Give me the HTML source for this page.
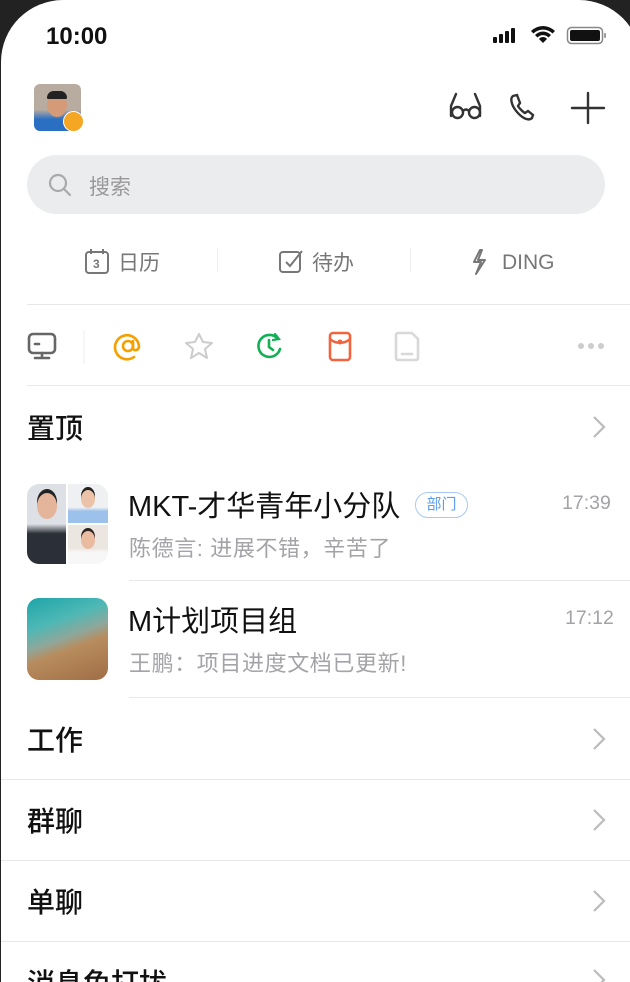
<!DOCTYPE html>
<html><head><meta charset="utf-8"><style>
*{margin:0;padding:0;box-sizing:border-box}
html,body{width:630px;height:982px;overflow:hidden}
body{background:#222;font-family:"Liberation Sans","Noto Sans CJK SC",sans-serif;position:relative}
#s{position:absolute;left:1px;top:0;width:640px;height:982px;background:#fff;border-radius:62px 62px 0 0}
.a{position:absolute}
.t{position:absolute;white-space:nowrap;line-height:1}
.ln{position:absolute;height:1px;background:#e8e8ea}
.h{font-size:28px;color:#111;font-weight:500}
.chev{position:absolute;left:592px;width:14px;height:24px}
.g{font-size:22px;color:#a3a3a8;letter-spacing:0.6px}
</style></head><body>
<div id="s"></div>
<div class="t" style="left:46px;top:25px;font-size:24px;font-weight:bold;color:#111">10:00</div>
<svg class="a" style="left:493px;top:26px" width="118" height="20">
<rect x="0" y="11" width="4" height="6" rx="1" fill="#111"/><rect x="6" y="8" width="4" height="9" rx="1" fill="#111"/><rect x="12" y="5" width="4" height="12" rx="1" fill="#111"/><rect x="18" y="2" width="4" height="15" rx="1" fill="#111"/>
<path d="M38 5a17 17 0 0 1 24 0l-2.5 2.5a13.5 13.5 0 0 0-19 0z M42 9a11 11 0 0 1 16 0l-2.5 2.5a7.5 7.5 0 0 0-11 0z M46 13a5 5 0 0 1 8 0l-4 4z" fill="#111"/>
<rect x="74.5" y="1.5" width="35" height="16" rx="4" fill="none" stroke="#888" stroke-width="1.5"/><rect x="77" y="4" width="30" height="11" rx="2" fill="#111"/><rect x="111" y="7" width="2" height="5" rx="1" fill="#999"/>
</svg>
<div class="a" style="left:34px;top:84px;width:47px;height:47px;border-radius:6px;background:linear-gradient(#b8aba0 0 55%,#2a6fc2 75%)"></div>
<div class="a" style="left:47px;top:93px;width:20px;height:24px;border-radius:50%;background:#d59a78"></div>
<div class="a" style="left:47px;top:91px;width:20px;height:8px;border-radius:10px 10px 2px 2px;background:#222"></div>
<div class="a" style="left:63px;top:111px;width:21px;height:21px;border-radius:50%;background:#f5a623;border:1.5px solid #fff"></div>
<svg class="a" style="left:448px;top:90px" width="160" height="36" fill="none" stroke="#333" stroke-width="2.4" stroke-linecap="round">
<path d="M8 4 3 16v10M27 4l5 12v10"/><rect x="4" y="17" width="11" height="11" rx="5.5"/><rect x="21" y="17" width="11" height="11" rx="5.5"/><path d="M15 21c2-2 4-2 6 0"/>
<path d="M69 5l-4 1c-3 2-2 9 4 16 6 7 12 9 15 6l1-3-5-4-3 2c-2-1-6-5-7-7l2-3z"/>
<path d="M140 3v30M124 18h32"/>
</svg>
<div class="a" style="left:27px;top:155px;width:578px;height:59px;border-radius:30px;background:#ebecee"></div>
<svg class="a" style="left:48px;top:173px" width="26" height="26" fill="none" stroke="#aaa" stroke-width="2.2"><circle cx="10" cy="10" r="8"/><path d="M16 16l6 6" stroke-linecap="round"/></svg>
<div class="t" style="left:89px;top:177px;font-size:21px;color:#999">搜索</div>
<svg class="a" style="left:84px;top:248px" width="440" height="28" fill="none" stroke="#777" stroke-width="2">
<rect x="2" y="4" width="22" height="21" rx="3"/><path d="M7 1v5M19 1v5"/><text x="9" y="20" font-size="12" fill="#777" stroke="none" font-family="Liberation Sans" font-weight="bold">3</text>
<rect x="196" y="4" width="20" height="20" rx="3"/><path d="M202 14l4 4 12-15"/>
<path d="M396 2l-6 12h7l-5 12 9-14h-7l4-10z" stroke-linejoin="round"/>
</svg>
<div class="t" style="left:118px;top:253px;font-size:21px;color:#777">日历</div>
<div class="a" style="left:217px;top:248px;width:1px;height:24px;background:#eee"></div>
<div class="t" style="left:312px;top:253px;font-size:21px;color:#777">待办</div>
<div class="a" style="left:410px;top:248px;width:1px;height:24px;background:#eee"></div>
<div class="t" style="left:502px;top:252px;font-size:21px;color:#777">DING</div>
<div class="ln" style="left:27px;top:304px;width:603px"></div>
<svg class="a" style="left:26px;top:330px" width="590" height="34" fill="none" stroke-width="2.6" stroke-linecap="round">
<g stroke="#666"><rect x="3" y="4" width="26" height="19" rx="4"/><path d="M9 28h14M16 23v5M9 14h4"/></g>
<path d="M58 -2v36" stroke="#eee" stroke-width="1"/>
<g stroke="#f5a000"><circle cx="102" cy="16" r="5"/><path d="M107 11v7c0 3 5 3 6-1a12 12 0 1 0-5 10"/></g>
<path d="M173 4l4 8 9 1-7 6 2 9-8-5-8 5 2-9-7-6 9-1z" stroke="#ccc" stroke-width="2" stroke-linejoin="round"/>
<g stroke="#11b055"><path d="M252 9a11 11 0 1 0 2 10"/><path d="M243 10v7l4 3"/><path d="M249 4l4 5-6 1" stroke-width="2.2"/></g>
<g stroke="#f2643c"><rect x="304" y="3" width="20" height="27" rx="3"/><path d="M304 9c5 5 15 5 20 0"/></g><circle cx="314" cy="12" r="2.5" fill="#f2643c"/>
<g stroke="#d8d8d8"><path d="M372 3h14l6 6v19a2 2 0 0 1-2 2h-18a2 2 0 0 1-2-2V5a2 2 0 0 1 2-2zM376 24h10"/></g>
<g fill="#ccc" stroke="none"><circle cx="555" cy="16" r="3"/><circle cx="565" cy="16" r="3"/><circle cx="575" cy="16" r="3"/></g>
</svg>
<div class="ln" style="left:27px;top:385px;width:603px"></div>
<div class="t h" style="left:27px;top:415px">置顶</div>
<svg class="chev" style="top:415px" viewBox="0 0 14 24"><path d="M2 2l10 10-10 10" fill="none" stroke="#bbb" stroke-width="2.2"/></svg>
<div class="a" style="left:27px;top:484px;width:81px;height:80px;border-radius:12px;overflow:hidden;background:#fff">
<div class="a" style="left:0;top:0;width:39px;height:80px;background:linear-gradient(#dde0e4 0 50%,#2b2f38 62%)"></div>
<div class="a" style="left:10px;top:9px;width:20px;height:26px;border-radius:50%;background:#e4b59a;box-shadow:0 -4px 0 #222"></div>
<div class="a" style="left:41px;top:0;width:40px;height:39px;background:linear-gradient(#eef0f2 0 60%,#9cc2ec 70%)"></div>
<div class="a" style="left:54px;top:6px;width:14px;height:18px;border-radius:50%;background:#ecc3a8;box-shadow:0 -3px 0 #222"></div>
<div class="a" style="left:41px;top:41px;width:40px;height:39px;background:linear-gradient(#ece6e0 0 60%,#f7f7f7 70%)"></div>
<div class="a" style="left:54px;top:47px;width:14px;height:18px;border-radius:50%;background:#e9bca2;box-shadow:0 -3px 0 #2a2222"></div>
</div>
<div class="t" style="left:128px;top:493px;font-size:29px;color:#111">MKT-才华青年小分队</div>
<div class="t" style="left:415px;top:492px;width:53px;height:26px;border:1px solid #a9c9f5;border-radius:13px;color:#5c9df0;font-size:15px;text-align:center;line-height:24px">部门</div>
<div class="t" style="left:562px;top:494px;font-size:19.5px;color:#a3a3a8">17:39</div>
<div class="t g" style="left:129px;top:538px">陈德言: 进展不错，辛苦了</div>
<div class="ln" style="left:129px;top:580px;width:501px"></div>
<div class="a" style="left:27px;top:598px;width:81px;height:82px;border-radius:12px;background:linear-gradient(160deg,#1ea5a9 0%,#4eb8b5 30%,#8fa79a 48%,#b88c5e 60%,#a06d45 100%)"></div>
<div class="t" style="left:128px;top:608px;font-size:29px;color:#111">M计划项目组</div>
<div class="t" style="left:565px;top:609px;font-size:19.5px;color:#a3a3a8">17:12</div>
<div class="t g" style="left:129px;top:653px">王鹏：项目进度文档已更新!</div>
<div class="ln" style="left:129px;top:697px;width:501px"></div>
<div class="t h" style="left:27px;top:727px">工作</div>
<svg class="chev" style="top:727px" viewBox="0 0 14 24"><path d="M2 2l10 10-10 10" fill="none" stroke="#bbb" stroke-width="2.2"/></svg>
<div class="ln" style="left:1px;top:779px;width:629px"></div>
<div class="t h" style="left:27px;top:808px">群聊</div>
<svg class="chev" style="top:808px" viewBox="0 0 14 24"><path d="M2 2l10 10-10 10" fill="none" stroke="#bbb" stroke-width="2.2"/></svg>
<div class="ln" style="left:1px;top:860px;width:629px"></div>
<div class="t h" style="left:27px;top:889px">单聊</div>
<svg class="chev" style="top:889px" viewBox="0 0 14 24"><path d="M2 2l10 10-10 10" fill="none" stroke="#bbb" stroke-width="2.2"/></svg>
<div class="ln" style="left:1px;top:941px;width:629px"></div>
<div class="t h" style="left:27px;top:970px">消息免打扰</div>
<svg class="chev" style="top:968px" viewBox="0 0 14 24"><path d="M2 2l10 10-10 10" fill="none" stroke="#bbb" stroke-width="2.2"/></svg>
</body></html>
